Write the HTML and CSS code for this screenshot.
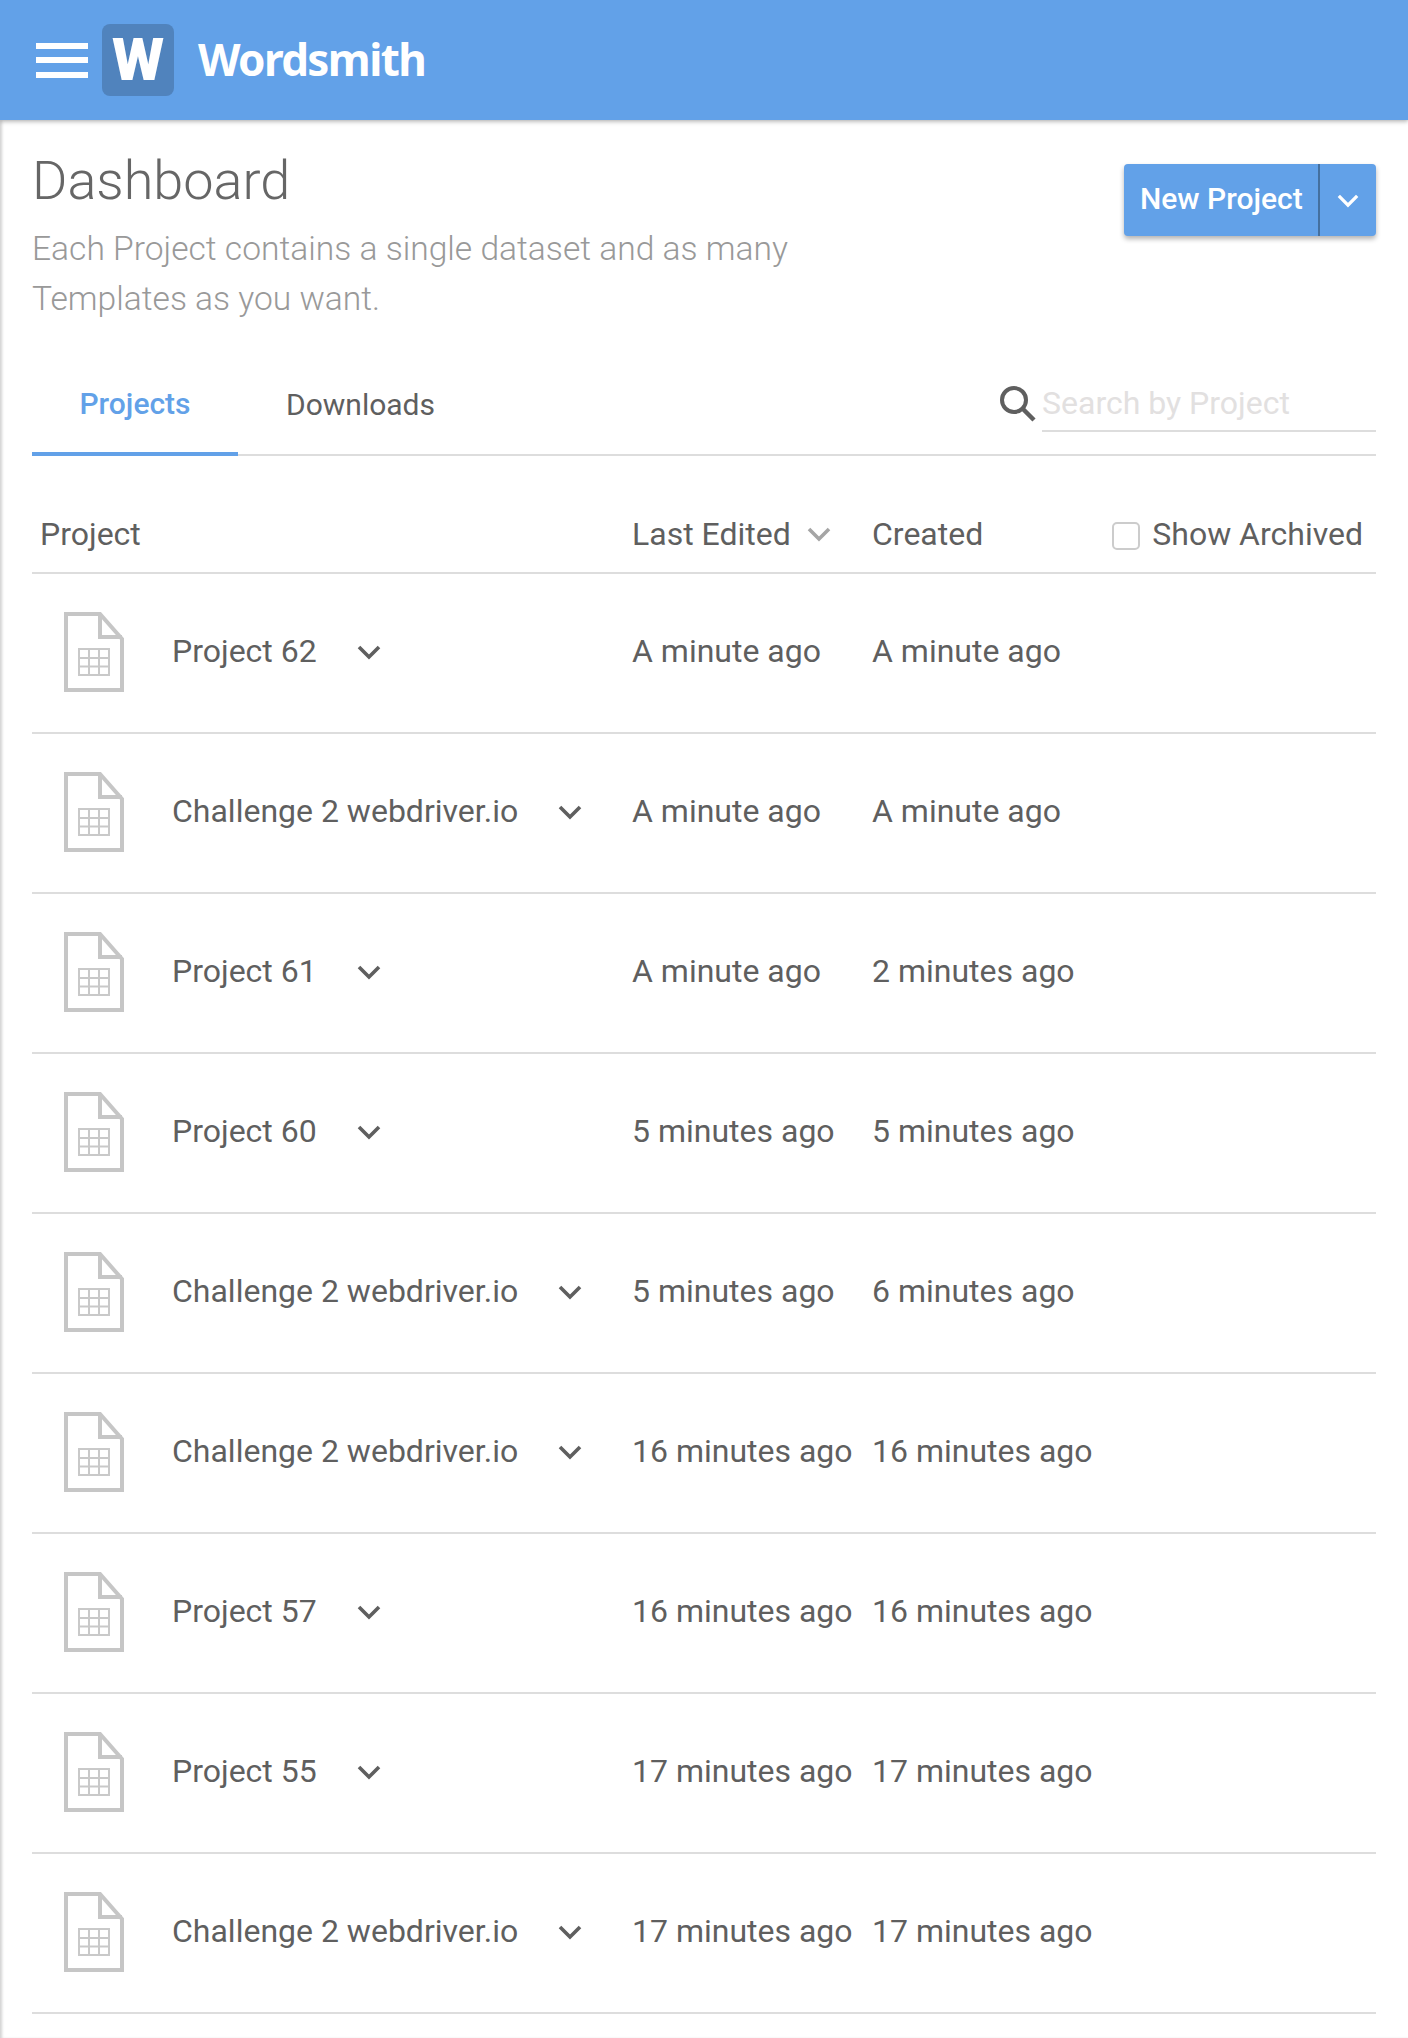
FILE: index.html

```html
<!DOCTYPE html>
<html lang="en">
<head>
    <meta charset="UTF-8">
    <title>Wordsmith - Dashboard</title>
    <link rel="stylesheet" href="styles.css">
</head>
<body>

<svg class="defs" width="0" height="0">
    <symbol id="file" viewBox="0 0 60 80">
        <path d="M2 2H36L58 27V78H2Z M36 2V25H58" fill="none" stroke="#c6c6c6" stroke-width="4"/>
        <path d="M15 37H45V63H15Z M25 37V63 M35 37V63 M15 46H45 M15 54.500H45" fill="none" stroke="#c9c9c9" stroke-width="2"/>
    </symbol>
    <symbol id="chev" viewBox="0 0 24 16">
        <path d="M2 3L12 13L22 3" fill="none" stroke="currentColor" stroke-width="3.600"/>
    </symbol>
</svg>

<header class="topbar">
    <div class="burger"><span></span><span></span><span></span></div>
    <div class="logo">W</div>
    <div class="brand">Wordsmith</div>
</header>

<main class="page">
    <section class="intro">
        <div>
            <h1>Dashboard</h1>
            <p>Each Project contains a single dataset and as many Templates as you want.</p>
        </div>
        <div class="new-btn">
            <span class="new-label">New Project</span>
            <span class="new-caret"><svg class="caret-w"><use href="#chev"/></svg></span>
        </div>
    </section>

    <nav class="tabs">
        <a class="tab active">Projects</a>
        <a class="tab">Downloads</a>
        <div class="search">
            <svg class="search-icon" viewBox="0 0 36 36">
                <circle cx="14" cy="14" r="12" fill="none" stroke="#5f5f5f" stroke-width="4"/>
                <path d="M23 23L34 34" stroke="#5f5f5f" stroke-width="4.500"/>
            </svg>
            <div class="search-field">Search by Project</div>
        </div>
    </nav>

    <div class="row head">
        <div class="col-name head-name">Project</div>
        <div class="col-edited">Last Edited <svg class="caret-sort"><use href="#chev"/></svg></div>
        <div class="col-created">Created</div>
        <label class="archived"><span class="check"></span>Show Archived</label>
    </div>

    <div id="rows"></div>
</main>

<script>
    // project list, newest first
    const projects = [
        ['Project 62', 'A minute ago', 'A minute ago'],
        ['Challenge 2 webdriver.io', 'A minute ago', 'A minute ago'],
        ['Project 61', 'A minute ago', '2 minutes ago'],
        ['Project 60', '5 minutes ago', '5 minutes ago'],
        ['Challenge 2 webdriver.io', '5 minutes ago', '6 minutes ago'],
        ['Challenge 2 webdriver.io', '16 minutes ago', '16 minutes ago'],
        ['Project 57', '16 minutes ago', '16 minutes ago'],
        ['Project 55', '17 minutes ago', '17 minutes ago'],
        ['Challenge 2 webdriver.io', '17 minutes ago', '17 minutes ago']
    ];

    document.getElementById('rows').innerHTML = projects.map(p => `
        <div class="row item">
            <div class="col-name">
                <svg class="file-icon"><use href="#file"/></svg>
                <span class="name">${p[0]}</span>
                <svg class="caret-row"><use href="#chev"/></svg>
            </div>
            <div class="col-edited when">${p[1]}</div>
            <div class="col-created when">${p[2]}</div>
        </div>`).join('');
</script>

</body>
</html>
```

FILE: styles.css

```css
body {
    margin: 0;
    font-family: Roboto, "Liberation Sans", sans-serif;
    color: #5f5f5f;
    background-color: #fff;
    overflow: hidden;
}

.defs {
    position: absolute;
}

.topbar {
    height: 120px;
    background-color: #62a1e8;
    box-shadow: 0 2px 4px rgba(0, 0, 0, 0.25);
    display: flex;
    align-items: center;
    padding-left: 36px;
    position: relative;
}

.burger {
    width: 52px;
    height: 35px;
    display: flex;
    flex-direction: column;
    justify-content: space-between;
    margin-right: 14px;
}

.burger span {
    height: 6px;
    background-color: #fff;
}

.logo {
    width: 72px;
    height: 72px;
    border-radius: 8px;
    background-color: #5083bd;
    color: #fff;
    font-weight: 900;
    font-size: 60px;
    line-height: 72px;
    text-align: center;
    margin-right: 24px;
}

.brand {
    color: #fff;
    font-family: "Noto Sans", sans-serif;
    font-weight: 700;
    font-size: 44px;
    letter-spacing: -1.600px;
    line-height: 58px;
    padding-bottom: 2px;
}

.page {
    height: 1918px;
    padding: 0 32px;
    box-shadow: inset 3px 0 3px -1px rgba(0, 0, 0, 0.18);
}

.intro {
    display: flex;
    justify-content: space-between;
    align-items: flex-start;
    height: 230px;
    padding-top: 28px;
    box-sizing: border-box;
}

h1 {
    margin: 0;
    font-weight: 300;
    font-size: 54px;
    line-height: 66px;
    color: #666;
}

.intro p {
    margin: 10px 0 0;
    width: 800px;
    font-weight: 300;
    font-size: 33.600px;
    line-height: 50px;
    color: #999;
}

.new-btn {
    display: flex;
    height: 72px;
    margin-top: 16px;
    border-radius: 4px;
    background-color: #62a1e8;
    color: #fff;
    font-size: 30px;
    font-weight: 500;
    line-height: 70px;
    box-shadow: 0 3px 5px rgba(0, 0, 0, 0.3);
}

.new-label {
    padding-left: 16px;
    width: 178px;
    white-space: nowrap;
}

.new-caret {
    width: 56px;
    border-left: 2px solid #44709f;
    display: flex;
    align-items: center;
    justify-content: center;
}

.caret-w {
    width: 22px;
    height: 15px;
    color: #fff;
}

.tabs {
    display: flex;
    height: 106px;
    box-sizing: border-box;
    border-bottom: 2px solid #ddd;
    font-size: 30px;
}

.tab {
    height: 106px;
    box-sizing: border-box;
    line-height: 110px;
    text-align: center;
    width: 245px;
}

.tab.active {
    width: 206px;
    line-height: 108px;
    color: #62a1e8;
    border-bottom: 4px solid #62a1e8;
    font-weight: 500;
}

.search {
    margin-left: auto;
    display: flex;
    align-items: flex-start;
}

.search-icon {
    width: 36px;
    height: 36px;
    margin: 36px 6px 0 0;
}

.search-field {
    width: 334px;
    height: 82px;
    box-sizing: border-box;
    padding-top: 28px;
    border-bottom: 2px solid #ddd;
    font-size: 32px;
    line-height: 50px;
    color: #e2e0e0;
}

.row {
    display: flex;
    align-items: center;
    border-bottom: 2px solid #ddd;
    box-sizing: border-box;
    font-size: 32px;
    white-space: nowrap;
}

.head {
    height: 118px;
    padding-top: 40px;
}

.item {
    height: 160px;
}

.col-name {
    width: 600px;
    display: flex;
    align-items: center;
}

.head-name {
    padding-left: 8px;
    box-sizing: border-box;
}

.col-edited {
    width: 240px;
    display: flex;
    align-items: center;
}

.col-created {
    flex: 1;
}

.name,
.when {
    padding-bottom: 4px;
}

.file-icon {
    width: 60px;
    height: 80px;
    margin: 0 48px 2px 32px;
}

.caret-row {
    width: 24px;
    height: 16px;
    margin: 0 0 2px 40px;
    color: #5f5f5f;
}

.caret-sort {
    width: 24px;
    height: 16px;
    margin-left: 16px;
    color: #a5a5a5;
}

.archived {
    display: flex;
    align-items: center;
    margin-right: 13px;
}

.check {
    width: 24px;
    height: 24px;
    margin: 4px 12px 0 0;
    border: 2px solid #ccc;
    border-radius: 5px;
}
```
